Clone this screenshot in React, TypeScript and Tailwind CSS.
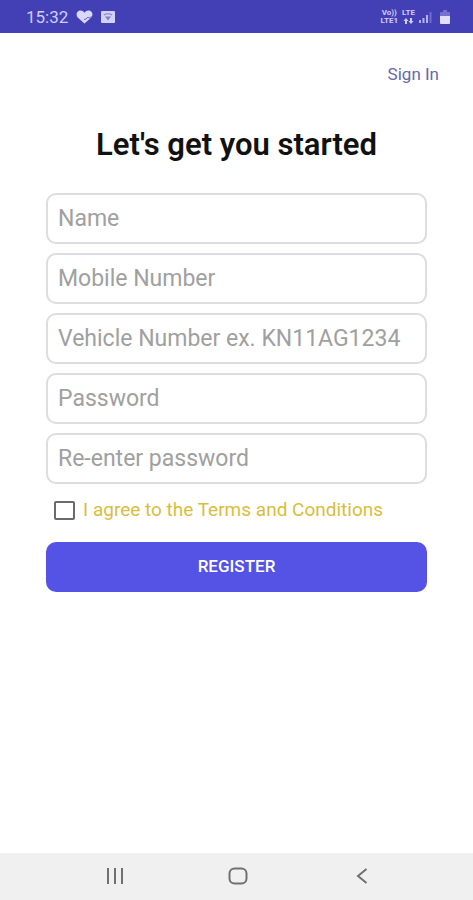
import { useState, FormEvent } from "react";

interface Field {
  name: string;
  placeholder: string;
  type: string;
}

const FIELDS: Field[] = [
  { name: "name", placeholder: "Name", type: "text" },
  { name: "mobile", placeholder: "Mobile Number", type: "tel" },
  { name: "vehicle", placeholder: "Vehicle Number ex. KN11AG1234", type: "text" },
  { name: "password", placeholder: "Password", type: "password" },
  { name: "confirm", placeholder: "Re-enter password", type: "password" },
];

const StatusBar = () => (
  <header className="flex h-[33px] items-center justify-between bg-[#4340b6] pl-[26px] pr-[23px] text-[#cfcdf6]">
    <div className="flex items-center gap-2 pt-px">
      <span className="text-[17px] leading-5">15:32</span>
      {/* Heart with a pulse line */}
      <svg className="h-[14px] w-[17px]" viewBox="0 0 17 14" aria-hidden="true">
        <path d="M8.5 13.5 2 7.8C-.2 5.400.2 2 2.700.900 4.800 0 7.200.700 8.500 2.800 9.800.700 12.200 0 14.300.900 16.800 2 17.200 5.400 15 7.800Z" fill="#d9d8fa" />
        <path d="M8 9.500 10 9l2-2 1 1.200 2.500-1.700" fill="none" stroke="#6a67c8" strokeWidth="1" />
      </svg>
      <svg className="h-3 w-[14px]" viewBox="0 0 14 12" aria-hidden="true">
        <rect width="14" height="12" rx="1" fill="#d3d1f8" />
        <path d="M3 4Q7 1.500 11 4" fill="none" stroke="#8380cf" strokeWidth="1.200" />
        <path d="M4 5.500h6L7 9.500Z" fill="#7f7ccd" />
      </svg>
    </div>

    <div className="flex items-center gap-1">
      <div className="text-center text-[8px] font-bold leading-[8px]">
        <p>Vo))</p>
        <p>LTE1</p>
      </div>
      <div className="flex flex-col items-center text-[8px] font-bold leading-[8px]">
        <p>LTE</p>
        <svg className="h-2 w-[11px]" viewBox="0 0 11 7" aria-hidden="true">
          <path d="M3 .5 5.500 3.500H4V6.500H2V3.500H.5ZM8 6.500 5.500 3.500H7V.5H9V3.500h1.500Z" fill="currentColor" />
        </svg>
      </div>
      <svg className="h-3 w-[13px]" viewBox="0 0 13 12" aria-hidden="true">
        <path d="M0 9h2v3H0zM3.500 7h2v5h-2zM7 4h2v8H7z" fill="#b3b0ec" />
        <path d="M10.500 1h2v11h-2z" fill="#6f6ccb" />
      </svg>
      {/* Battery, partly drained */}
      <svg className="ml-1 h-[14px] w-[10px]" viewBox="0 0 10 14" aria-hidden="true">
        <path d="M3 0h4v2h2a1 1 0 0 1 1 1v4H0V3a1 1 0 0 1 1-1h2Z" fill="#7673cf" />
        <path d="M0 6h10v7a1 1 0 0 1-1 1H1a1 1 0 0 1-1-1Z" fill="#e1e0fc" />
      </svg>
    </div>
  </header>
);

const NavigationBar = () => (
  <nav className="flex h-[47px] items-center justify-around bg-[#f0f0f0] pb-[2px] pl-[53px] pr-[49px] text-[#707070]">
    <button type="button" aria-label="Recent apps" className="flex w-6 justify-center">
      <svg className="h-4 w-[18px]" viewBox="0 0 18 16" fill="none" stroke="currentColor" strokeWidth="2">
        <path d="M2 0v16M9 0v16M16 0v16" />
      </svg>
    </button>
    <button type="button" aria-label="Home" className="flex w-6 justify-center">
      <svg className="h-[18px] w-5" viewBox="0 0 20 18" fill="none" stroke="currentColor" strokeWidth="2">
        <rect x="1.500" y="1.500" width="17" height="15" rx="5" />
      </svg>
    </button>
    <button type="button" aria-label="Back" className="flex w-6 justify-center">
      <svg className="h-4 w-3" viewBox="0 0 12 16" fill="none" stroke="currentColor" strokeWidth="2">
        <path d="M10.500 1 2 8l8.500 7" />
      </svg>
    </button>
  </nav>
);

const App = () => {
  const [agreed, setAgreed] = useState<boolean>(false);

  const handleSubmit = (e: FormEvent) => {
    e.preventDefault();
  };

  return (
    <div className="flex min-h-screen flex-col bg-white font-[Roboto,sans-serif]">
      <StatusBar />

      <main className="flex-1">
        <div className="flex justify-end px-[34px] pt-[31px]">
          <a href="#signin" className="text-[17px] leading-5 text-[#6a67a8]">Sign In</a>
        </div>

        <h1 className="mt-[45px] text-center text-[31px] font-semibold leading-8 text-[#111111]">
          Let's get you started
        </h1>

        <form onSubmit={handleSubmit} className="mt-8 px-[46px]">
          <div className="flex flex-col gap-[9px]">
            {FIELDS.map((field) => (
              <input
                key={field.name}
                name={field.name}
                type={field.type}
                placeholder={field.placeholder}
                aria-label={field.placeholder}
                className="h-[51px] w-full rounded-[10px] border-2 border-[#dcdce2] bg-white px-[10px] text-[23px] text-[#333333] outline-none placeholder:text-[#a0a0a0]"
              />
            ))}
          </div>

          <label className="mt-4 flex items-center gap-2 pl-2 text-[19px] leading-5 text-[#d8be3c]">
            <input
              type="checkbox"
              checked={agreed}
              onChange={(e) => setAgreed(e.target.checked)}
              className="h-[19px] w-[21px] appearance-none rounded-[2px] border-2 border-[#6b6b6b] bg-white checked:bg-[#5552e6]"
            />
            I agree to the Terms and Conditions
          </label>

          <button
            type="submit"
            className="mt-[22px] h-[50px] w-full rounded-[10px] bg-[#5552e6] text-[17px] font-medium text-white"
          >
            REGISTER
          </button>
        </form>
      </main>

      <NavigationBar />
    </div>
  );
};

export default App;
